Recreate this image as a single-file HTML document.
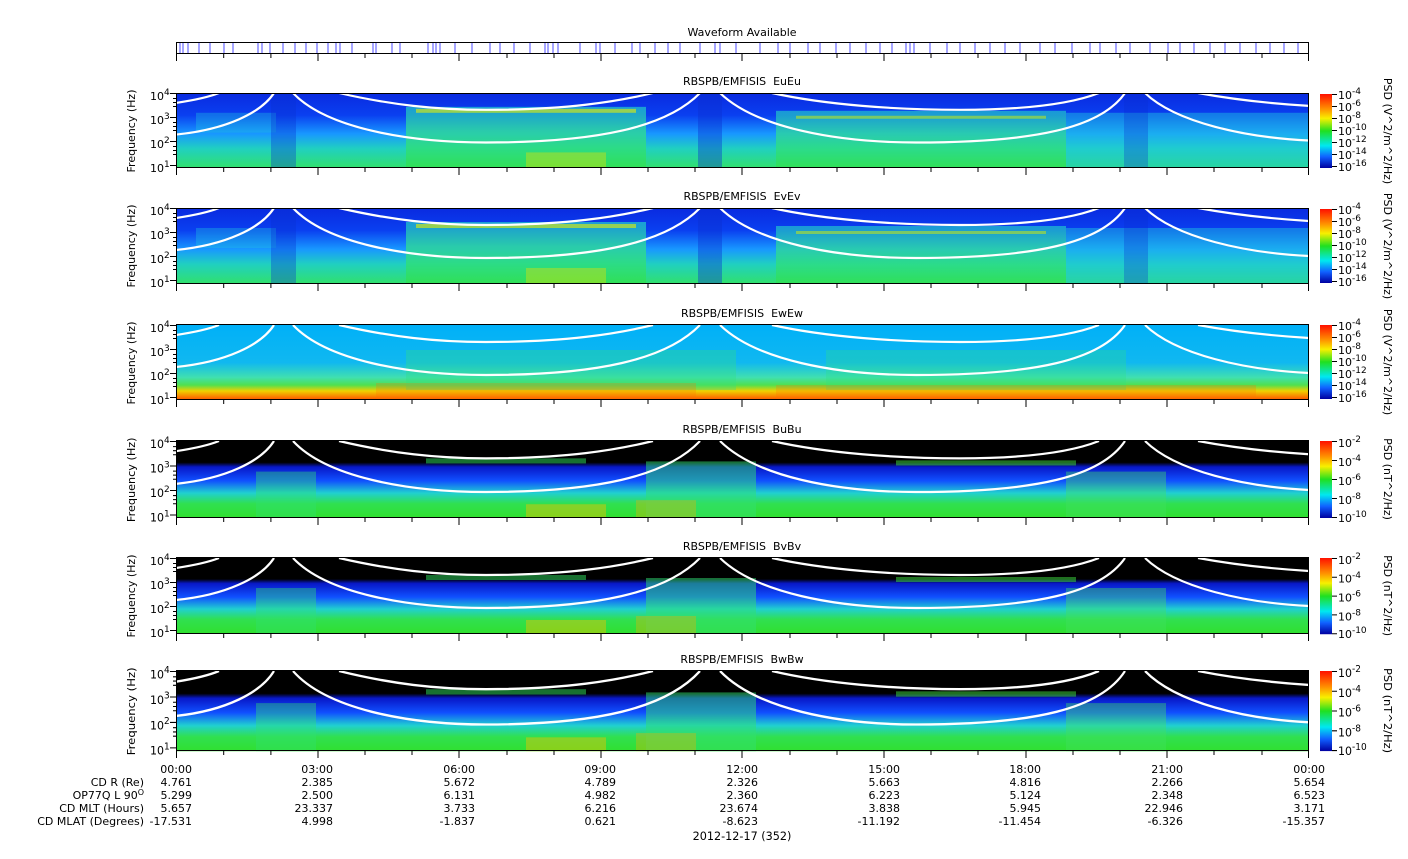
<!DOCTYPE html>
<html><head><meta charset="utf-8"><style>
html,body{margin:0;padding:0;background:#fff}
svg{display:block}
text{font-family:"DejaVu Sans","Liberation Sans",sans-serif;font-size:11px;fill:#000}
</style></head><body>
<svg width="1408" height="859" viewBox="0 0 1408 859" xmlns="http://www.w3.org/2000/svg">
<defs>
<linearGradient id="gE" x1="0" y1="0" x2="0" y2="1">
<stop offset="0" stop-color="#0a2ae0"/><stop offset="0.3" stop-color="#0a40f0"/><stop offset="0.55" stop-color="#1898ff"/><stop offset="0.75" stop-color="#20d0c0"/><stop offset="1" stop-color="#30e070"/></linearGradient>
<linearGradient id="gEg" x1="0" y1="0" x2="0" y2="1">
<stop offset="0" stop-color="#20c0d0"/><stop offset="0.4" stop-color="#30e090"/><stop offset="1" stop-color="#30e050"/></linearGradient>
<linearGradient id="gW" x1="0" y1="0" x2="0" y2="1">
<stop offset="0" stop-color="#00b0f8"/><stop offset="0.5" stop-color="#10b8f0"/><stop offset="0.7" stop-color="#40e0b0"/><stop offset="0.8" stop-color="#50e050"/><stop offset="0.88" stop-color="#f0d000"/><stop offset="1" stop-color="#ff5000"/></linearGradient>
<linearGradient id="gB" x1="0" y1="0" x2="0" y2="1">
<stop offset="0" stop-color="#000"/><stop offset="0.28" stop-color="#000"/><stop offset="0.34" stop-color="#0818c8"/><stop offset="0.52" stop-color="#1050ff"/><stop offset="0.68" stop-color="#20d0d0"/><stop offset="0.82" stop-color="#30e050"/><stop offset="1" stop-color="#30e030"/></linearGradient>
<linearGradient id="gC" x1="0" y1="0" x2="0" y2="1">
<stop offset="0" stop-color="#ff1000"/><stop offset="0.2" stop-color="#ff9000"/><stop offset="0.33" stop-color="#f8f000"/><stop offset="0.5" stop-color="#20e020"/><stop offset="0.7" stop-color="#00e8f0"/><stop offset="0.85" stop-color="#1060ff"/><stop offset="1" stop-color="#0000a0"/></linearGradient>
<g id="curves" fill="none" stroke="#fff" stroke-width="2.2">
<path d="M0,10 C20,7 33,4 43,0 M163,0 C215,12 260,17 310,17 C390,17 440,9 477,0 M596,0 C650,12 720,17 784,17 C860,17 900,9 923,0 M1022,0 C1060,7 1100,11 1133,13"/>
<path d="M0,42 C50,37 85,20 98,0 M117,0 C150,35 230,50 310,50 C420,50 490,35 524,0 M544,0 C580,35 660,50 740,50 C860,50 925,35 949,0 M969,0 C1000,30 1070,45 1133,48"/>
</g>
<g id="pE">
<rect width="1133" height="75" fill="url(#gE)"/>
<rect x="230" y="14" width="240" height="61" fill="url(#gEg)" opacity="0.75"/>
<rect x="600" y="18" width="290" height="57" fill="url(#gEg)" opacity="0.7"/>
<rect x="890" y="20" width="243" height="55" fill="#20c8e0" opacity="0.45"/>
<rect x="20" y="20" width="80" height="20" fill="#20c8e0" opacity="0.35"/>
<rect x="95" y="0" width="25" height="75" fill="#0a30d0" opacity="0.35"/>
<rect x="522" y="0" width="24" height="75" fill="#0a30d0" opacity="0.4"/>
<rect x="948" y="0" width="24" height="75" fill="#0a30d0" opacity="0.3"/>
<rect x="240" y="16" width="220" height="4" fill="#e8f000" opacity="0.6"/>
<rect x="620" y="23" width="250" height="3" fill="#d8f000" opacity="0.5"/>
<rect x="350" y="60" width="80" height="15" fill="#e8e000" opacity="0.4"/>
</g>
<g id="pB">
<rect width="1133" height="75" fill="url(#gB)"/>
<rect x="80" y="30" width="60" height="45" fill="#30e070" opacity="0.4"/>
<rect x="470" y="20" width="110" height="55" fill="#30e070" opacity="0.5"/>
<rect x="890" y="30" width="100" height="45" fill="#40e060" opacity="0.4"/>
<rect x="250" y="17" width="160" height="5" fill="#30e060" opacity="0.5"/>
<rect x="720" y="19" width="180" height="5" fill="#40e040" opacity="0.5"/>
<rect x="350" y="62" width="80" height="13" fill="#f0c000" opacity="0.45"/>
<rect x="460" y="58" width="60" height="17" fill="#f0b000" opacity="0.35"/>
</g>
<g id="pW">
<rect width="1133" height="75" fill="url(#gW)"/>
<rect x="230" y="25" width="330" height="40" fill="#30e080" opacity="0.35"/>
<rect x="650" y="25" width="300" height="40" fill="#30e080" opacity="0.3"/>
<rect x="200" y="58" width="320" height="17" fill="#ff7000" opacity="0.25"/>
<rect x="600" y="60" width="480" height="15" fill="#ff7000" opacity="0.25"/>
</g>
<g id="ticks" stroke="#000" stroke-width="1">
<path d="M0.5,0v7M47.7,0v4M94.9,0v4M142,0v7M189,0v4M236,0v4M283,0v7M331,0v4M378,0v4M425,0v7M472,0v4M519,0v4M566,0v7M614,0v4M661,0v4M708,0v7M755,0v4M802,0v4M850,0v7M897,0v4M944,0v4M991,0v7M1038,0v4M1086,0v4M1132.5,0v7"/>
</g>
<g id="yax" style="font-size:12px"><text x="150" y="7">10<tspan dy="-5" style="font-size:9px">4</tspan></text><text x="150" y="31">10<tspan dy="-5" style="font-size:9px">3</tspan></text><text x="150" y="55">10<tspan dy="-5" style="font-size:9px">2</tspan></text><text x="150" y="79">10<tspan dy="-5" style="font-size:9px">1</tspan></text><text transform="translate(135,38) rotate(-90)" text-anchor="middle" style="font-size:11px">Frequency (Hz)</text>
<path d="M170,0.5h6M170,24.5h6M170,48.5h6M170,72.5h6M173,5.5h3M173,9.5h3M173,13.5h3M173,29.5h3M173,33.5h3M173,37.5h3M173,53.5h3M173,57.5h3M173,61.5h3" stroke="#000"/></g>
<g id="cbE" style="font-size:12px"><rect x="1320" y="0" width="12" height="74" fill="url(#gC)"/><path d="M1332,0.5h5M1332,12.5h5M1332,24.5h5M1332,36.5h5M1332,48.5h5M1332,60.5h5M1332,72.5h5" stroke="#000"/>
<text x="1338" y="5">10<tspan dy="-5" style="font-size:9px">-4</tspan></text><text x="1338" y="17">10<tspan dy="-5" style="font-size:9px">-6</tspan></text><text x="1338" y="29">10<tspan dy="-5" style="font-size:9px">-8</tspan></text><text x="1338" y="41">10<tspan dy="-5" style="font-size:9px">-10</tspan></text><text x="1338" y="53">10<tspan dy="-5" style="font-size:9px">-12</tspan></text><text x="1338" y="65">10<tspan dy="-5" style="font-size:9px">-14</tspan></text><text x="1338" y="77">10<tspan dy="-5" style="font-size:9px">-16</tspan></text>
<text transform="translate(1384,37) rotate(90)" text-anchor="middle" style="font-size:11px">PSD (V^2/m^2/Hz)</text></g>
<g id="cbB" style="font-size:12px"><rect x="1320" y="0" width="12" height="77" fill="url(#gC)"/><path d="M1332,0.5h5M1332,19.5h5M1332,38.5h5M1332,57.5h5M1332,76.5h5" stroke="#000"/>
<text x="1338" y="6">10<tspan dy="-5" style="font-size:9px">-2</tspan></text><text x="1338" y="25">10<tspan dy="-5" style="font-size:9px">-4</tspan></text><text x="1338" y="44">10<tspan dy="-5" style="font-size:9px">-6</tspan></text><text x="1338" y="63">10<tspan dy="-5" style="font-size:9px">-8</tspan></text><text x="1338" y="81">10<tspan dy="-5" style="font-size:9px">-10</tspan></text>
<text transform="translate(1384,38) rotate(90)" text-anchor="middle" style="font-size:11px">PSD (nT^2/Hz)</text></g>
</defs>

<text x="742" y="36" text-anchor="middle">Waveform Available</text>
<rect x="176.5" y="42.5" width="1132" height="11" fill="#fff" stroke="#000"/>
<g stroke="#6a6aff" stroke-width="1.2">
<path d="M180,43v10M183,43v10M188,43v10M199,43v10M210,43v10M224,43v10M233,43v10M258,43v10M262,43v10M270,43v10M283,43v10M295,43v10M306,43v10M317,43v10M328,43v10M336,43v10M340,43v10M352,43v10M373,43v10M376,43v10M392,43v10M400,43v10M428,43v10M433,43v10M436,43v10M440,43v10M455,43v10M472,43v10M490,43v10M500,43v10M514,43v10M530,43v10M545,43v10M548,43v10M553,43v10M558,43v10M580,43v10M596,43v10M600,43v10M615,43v10M632,43v10M640,43v10M655,43v10M668,43v10M680,43v10M700,43v10M715,43v10M720,43v10M736,43v10M760,43v10M778,43v10M790,43v10M808,43v10M820,43v10M836,43v10M850,43v10M866,43v10M880,43v10M892,43v10M906,43v10M910,43v10M914,43v10M930,43v10M947,43v10M960,43v10M975,43v10M990,43v10M1005,43v10M1020,43v10M1040,43v10M1055,43v10M1072,43v10M1090,43v10M1100,43v10M1116,43v10M1130,43v10M1150,43v10M1168,43v10M1180,43v10M1194,43v10M1210,43v10M1225,43v10M1240,43v10M1256,43v10M1270,43v10M1284,43v10M1298,43v10"/>
</g>
<use href="#ticks" x="176" y="54"/>

<text x="742" y="85" text-anchor="middle">RBSPB/EMFISIS&#160;&#160;EuEu</text>
<g transform="translate(176,93) scale(1,0.99)"><use href="#pE"/><use href="#curves"/></g>
<rect x="176.5" y="93.5" width="1132" height="74" fill="none" stroke="#000"/>
<use href="#ticks" x="176" y="168"/>

<text x="742" y="200" text-anchor="middle">RBSPB/EMFISIS&#160;&#160;EvEv</text>
<g transform="translate(176,208)"><use href="#pE"/><use href="#curves"/></g>
<rect x="176.5" y="208.5" width="1132" height="75" fill="none" stroke="#000"/>
<use href="#ticks" x="176" y="284"/>

<text x="742" y="317" text-anchor="middle">RBSPB/EMFISIS&#160;&#160;EwEw</text>
<g transform="translate(176,325)"><use href="#pW"/><use href="#curves"/></g>
<rect x="176.5" y="324.5" width="1132" height="75" fill="none" stroke="#000"/>
<use href="#ticks" x="176" y="400"/>

<text x="742" y="433" text-anchor="middle">RBSPB/EMFISIS&#160;&#160;BuBu</text>
<g transform="translate(176,441) scale(1,1.02)"><use href="#pB"/><use href="#curves"/></g>
<rect x="176.5" y="440.5" width="1132" height="77" fill="none" stroke="#000"/>
<use href="#ticks" x="176" y="518"/>

<text x="742" y="550" text-anchor="middle">RBSPB/EMFISIS&#160;&#160;BvBv</text>
<g transform="translate(176,558)"><use href="#pB"/><use href="#curves"/></g>
<rect x="176.5" y="557.5" width="1132" height="76" fill="none" stroke="#000"/>
<use href="#ticks" x="176" y="634"/>

<text x="742" y="663" text-anchor="middle">RBSPB/EMFISIS&#160;&#160;BwBw</text>
<g transform="translate(176,671) scale(1,1.07)"><use href="#pB"/><use href="#curves"/></g>
<rect x="176.5" y="670.5" width="1132" height="80" fill="none" stroke="#000"/>
<use href="#ticks" x="176" y="751"/>

<use href="#yax" y="93"/>
<use href="#yax" y="208"/>
<use href="#yax" y="325"/>
<g transform="translate(0,441) scale(1,1.02)"><use href="#yax"/></g>
<use href="#yax" y="558"/>
<g transform="translate(0,671) scale(1,1.06)"><use href="#yax"/></g>

<use href="#cbE" y="94"/>
<use href="#cbE" y="209"/>
<use href="#cbE" y="325"/>
<use href="#cbB" y="441"/>
<g transform="translate(0,558) scale(1,0.99)"><use href="#cbB"/></g>
<g transform="translate(0,671) scale(1,1.04)"><use href="#cbB"/></g>

<g text-anchor="end" style="font-size:11.2px">
<text x="144" y="786">CD R (Re)</text>
<text x="144" y="799">OP77Q L 90<tspan dy="-4" style="font-size:8px">O</tspan></text>
<text x="144" y="812">CD MLT (Hours)</text>
<text x="144" y="825">CD MLAT (Degrees)</text>
<g transform="translate(192,0)"><text y="773">00:00</text><text y="786">4.761</text><text y="799">5.299</text><text y="812">5.657</text><text y="825">-17.531</text></g>
<g transform="translate(333,0)"><text y="773">03:00</text><text y="786">2.385</text><text y="799">2.500</text><text y="812">23.337</text><text y="825">4.998</text></g>
<g transform="translate(475,0)"><text y="773">06:00</text><text y="786">5.672</text><text y="799">6.131</text><text y="812">3.733</text><text y="825">-1.837</text></g>
<g transform="translate(616,0)"><text y="773">09:00</text><text y="786">4.789</text><text y="799">4.982</text><text y="812">6.216</text><text y="825">0.621</text></g>
<g transform="translate(758,0)"><text y="773">12:00</text><text y="786">2.326</text><text y="799">2.360</text><text y="812">23.674</text><text y="825">-8.623</text></g>
<g transform="translate(900,0)"><text y="773">15:00</text><text y="786">5.663</text><text y="799">6.223</text><text y="812">3.838</text><text y="825">-11.192</text></g>
<g transform="translate(1041,0)"><text y="773">18:00</text><text y="786">4.816</text><text y="799">5.124</text><text y="812">5.945</text><text y="825">-11.454</text></g>
<g transform="translate(1183,0)"><text y="773">21:00</text><text y="786">2.266</text><text y="799">2.348</text><text y="812">22.946</text><text y="825">-6.326</text></g>
<g transform="translate(1325,0)"><text y="773">00:00</text><text y="786">5.654</text><text y="799">6.523</text><text y="812">3.171</text><text y="825">-15.357</text></g>
</g>
<text x="742" y="840" text-anchor="middle" style="font-size:11.2px">2012-12-17 (352)</text>
</svg>
</body></html>
